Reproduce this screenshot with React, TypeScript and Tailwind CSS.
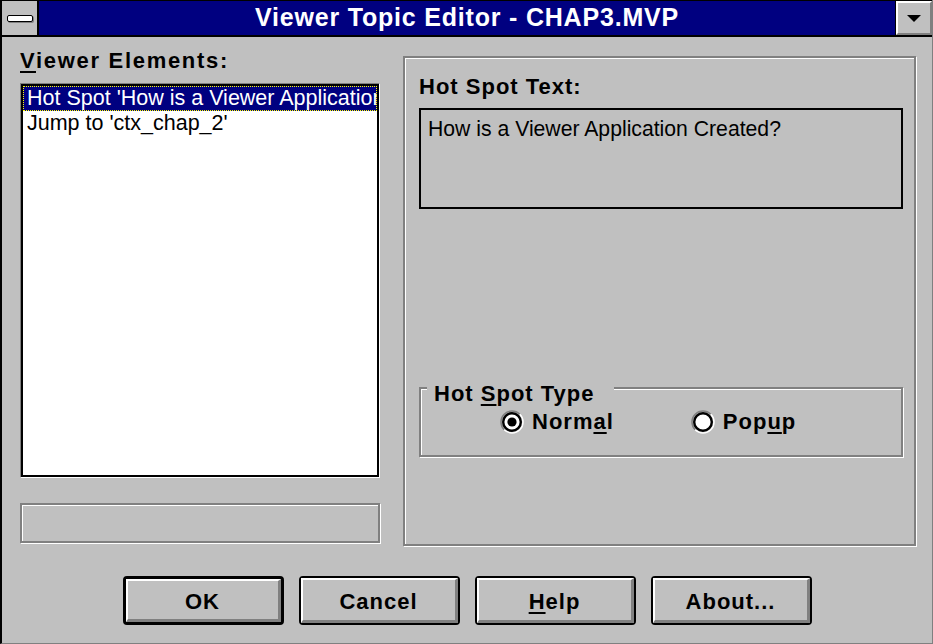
import type { ReactNode } from 'react';

const sans = "font-['Liberation_Sans',Arial,sans-serif]";
const boldFace = "font-['Liberation_Sans',Arial,sans-serif] font-bold text-[22px] leading-[24px] text-black";
const boldLabel = `${boldFace} tracking-[1px]`;

function Key({ children }: { children: ReactNode }) {
  return <span className="underline decoration-2 underline-offset-[3px]">{children}</span>;
}

// grey/white engraved frame used by panels and group boxes
function Etched({ className, children }: { className?: string; children?: ReactNode }) {
  return (
    <div className={`border-2 border-[#808080] shadow-[inset_1px_1px_0_#fff,1px_1px_0_#fff] ${className ?? ''}`}>
      {children}
    </div>
  );
}

function Radio({ on }: { on?: boolean }) {
  return (
    <svg width="24" height="24" viewBox="0 0 24 24">
      <path d="M4.2 19.8 A11 11 0 0 1 19.8 4.2" fill="none" stroke="#808080" strokeWidth="1.5" />
      <path d="M19.8 4.2 A11 11 0 0 1 4.2 19.8" fill="none" stroke="#fff" strokeWidth="1.5" />
      <circle cx="12" cy="12" r="8.8" fill="#fff" stroke="#000" strokeWidth="2.4" />
      {on && <circle cx="12" cy="12" r="4.6" fill="#000" />}
    </svg>
  );
}

function Button({ children, primary }: { children: ReactNode; primary?: boolean }) {
  return (
    <div
      className={`w-[161px] h-[49px] rounded-[4px] border-black bg-[#c0c0c0] ${primary ? 'border-[3px]' : 'border-2'}`}
    >
      <div
        className={`h-full flex items-center justify-center pt-[3px] border-t-2 border-l-2 border-b-[3px] border-r-[3px] border-t-white border-l-white border-b-[#808080] border-r-[#808080] ${boldLabel}`}
      >
        {children}
      </div>
    </div>
  );
}

export default function App() {
  return (
    <div className="w-[933px] h-[644px] flex flex-col bg-[#c0c0c0] border-l-2 border-black border-b border-b-[#808080] border-r border-r-[#808080] overflow-hidden">
      {/* caption bar */}
      <div className="flex h-[37px] shrink-0 border-t border-b-2 border-black bg-[#000080]">
        <div className="w-[37px] border-r-2 border-black bg-[#c0c0c0] flex items-center justify-center">
          <div className="w-[26px] h-[7px] rounded-[2px] border-[1.5px] border-black bg-white shadow-[1px_1px_0_#808080]" />
        </div>
        <div className="flex-1 flex items-center justify-center text-white font-['Liberation_Sans',Arial,sans-serif] font-bold text-[25px] tracking-[0.8px]">
          Viewer Topic Editor - CHAP3.MVP
        </div>
        <div className="w-[37px] border-l border-black bg-[#c0c0c0]">
          <div className="h-full flex items-center justify-center border-t-2 border-l-2 border-white border-b-2 border-r-2 border-b-[#808080] border-r-[#808080]">
            <svg width="14" height="7" viewBox="0 0 14 7">
              <path d="M0 0 H14 L7 7 Z" fill="#000" />
            </svg>
          </div>
        </div>
      </div>

      <div className="flex pl-[18px] gap-[23px]">
        {/* element list */}
        <div className="w-[360px] pt-[12px] flex flex-col">
          <div className={`${boldFace} tracking-[1.7px]`}>
            <Key>V</Key>iewer Elements:
          </div>
          <div className="mt-[10px] h-[395px] border border-t-[#808080] border-l-[#808080] border-b-white border-r-white">
            <div className={`h-full border-2 border-black bg-white overflow-hidden text-[21.5px] leading-[25px] ${sans}`}>
              <div className="h-[25px] pl-[4px] whitespace-nowrap overflow-hidden bg-[#000080] text-white outline-1 outline-dotted outline-[#ffff00] -outline-offset-1">
                Hot Spot 'How is a Viewer Application
              </div>
              <div className="h-[25px] pl-[4px] whitespace-nowrap text-black">Jump to 'ctx_chap_2'</div>
            </div>
          </div>
          <Etched className="mt-[25px] h-[40px]" />
        </div>

        {/* properties of the selected element */}
        <Etched className="mt-[19px] w-[513px] h-[490px] pt-[17px] pl-[14px]">
          <div className={boldLabel}>Hot Spot Text:</div>
          <div className={`mt-[9px] w-[484px] h-[101px] border-2 border-black pl-[7px] pt-[7px] text-[21.2px] leading-[24px] text-black ${sans}`}>
            How is a Viewer Application Created?
          </div>

          <Etched className="relative mt-[178px] w-[484px] h-[70px]">
            <div className={`absolute left-[6px] -top-[7px] pl-[7px] pr-[20px] bg-[#c0c0c0] ${boldLabel}`}>
              Hot <Key>S</Key>pot Type
            </div>
            <div className={`flex items-center pt-[21px] pl-[79px] ${boldLabel}`}>
              <div className="flex items-center gap-[8px]">
                <Radio on />
                <span>
                  Norm<Key>a</Key>l
                </span>
              </div>
              <div className="flex items-center gap-[8px] ml-[77px]">
                <Radio />
                <span>
                  Pop<Key>u</Key>p
                </span>
              </div>
            </div>
          </Etched>
        </Etched>
      </div>

      <div className="mt-[30px] flex justify-center gap-[15px]">
        <Button primary>OK</Button>
        <Button>Cancel</Button>
        <Button>
          <Key>H</Key>elp
        </Button>
        <Button>About...</Button>
      </div>
    </div>
  );
}
